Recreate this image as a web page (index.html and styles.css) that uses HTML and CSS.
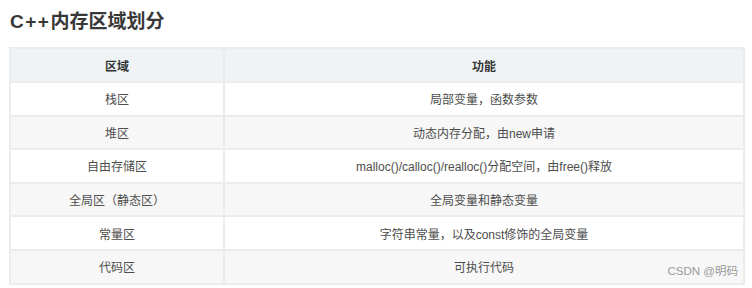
FILE: index.html
```html
<!DOCTYPE html>
<html lang="zh-CN">
<head>
    <meta charset="UTF-8">
    <title>C++内存区域划分</title>
    <link rel="stylesheet" href="styles.css">
</head>
<body>
    <h2 class="title"><span class="lang">C++</span>内存区域划分</h2>

    <div class="table-wrap">
        <table class="mem-table">
            <thead>
                <tr>
                    <th class="col-area">区域</th>
                    <th>功能</th>
                </tr>
            </thead>
            <tbody>
                <tr><td>栈区</td><td>局部变量，函数参数</td></tr>
                <tr><td>堆区</td><td>动态内存分配，由new申请</td></tr>
                <tr><td>自由存储区</td><td>malloc()/calloc()/realloc()分配空间，由free()释放</td></tr>
                <tr><td>全局区（静态区）</td><td>全局变量和静态变量</td></tr>
                <tr><td>常量区</td><td>字符串常量，以及const修饰的全局变量</td></tr>
                <tr><td>代码区</td><td>可执行代码</td></tr>
            </tbody>
        </table>
        <span class="watermark">CSDN @明码</span>
    </div>
</body>
</html>
```
FILE: styles.css
```css
body {
    margin: 0;
    padding: 0 8px 0 9px;
    background: #fff;
    font-family: "Liberation Sans", "Noto Sans CJK SC", sans-serif;
    color: #4d4d4d;
}

.title {
    margin: 0;
    padding: 9px 0 0 1px;
    height: 47px;
    box-sizing: border-box;
    font-size: 19px;
    font-weight: bold;
    color: #383838;
    line-height: 26px;
}

.title .lang {
    letter-spacing: 1.5px;
}

.table-wrap {
    position: relative;
    width: 736px;
}

.mem-table {
    width: 100%;
    border-collapse: collapse;
    font-size: 12px;
    border: 2px solid #ececec;
}

.mem-table th,
.mem-table td {
    border: 2px solid #ececec;
    text-align: center;
    height: 31.6px;
    padding: 0 8px;
}

.mem-table th {
    background: #eff3f5;
    color: #333;
    font-weight: bold;
    height: 32px;
}

.mem-table .col-area {
    width: 196px;
}

.mem-table tbody tr:nth-child(even) td {
    background: #f7f7f7;
}

.watermark {
    position: absolute;
    right: 7px;
    bottom: 7px;
    font-size: 11.5px;
    color: #9a9a9a;
}
```
